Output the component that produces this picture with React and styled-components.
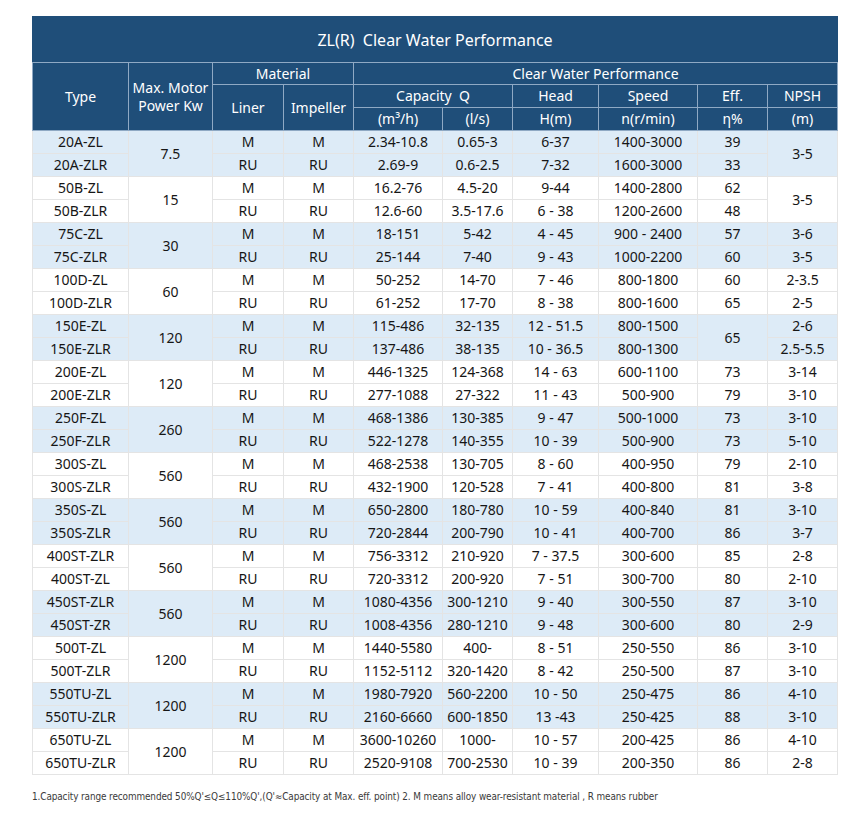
import React from "react";
import styled, { createGlobalStyle } from "styled-components";

const Global = createGlobalStyle`
  html, body { margin: 0; padding: 0; background: #ffffff; }
  body { font-family: "Noto Sans", "Open Sans", sans-serif; }
`;

const Page = styled.div`
  padding: 16px 0 0 32px;
  width: 868px;
  box-sizing: border-box;
`;

const Table = styled.table`
  border-collapse: collapse;
  table-layout: fixed;
  width: 805px;
  font-family: "Noto Sans", "Open Sans", sans-serif;
  font-size: 14px;
`;

const HeadCell = styled.th`
  background: #1f4e79;
  color: #ffffff;
  font-weight: 400;
  border: 1px solid #8fa9c4;
  padding: 0;
  text-align: center;
  vertical-align: middle;
  line-height: 18px;
  white-space: nowrap;
`;

const TitleCell = styled(HeadCell)`
  font-size: 16px;
  white-space: pre;
  border-top-color: #1f4e79;
  border-left-color: #1f4e79;
  border-right-color: #1f4e79;
`;

const HeadRow = styled.tr`
  height: ${(p) => p.$h}px;
`;

const BodyRow = styled.tr`
  height: 23px;
  background: ${(p) => (p.$blue ? "#ddebf7" : "#ffffff")};
`;

const Cell = styled.td`
  border: 1px solid #e4e4e4;
  padding: 0;
  text-align: center;
  vertical-align: middle;
  color: #161616;
  line-height: 18px;
  white-space: nowrap;
`;

const Note = styled.p`
  margin: 16px 0 0 0;
  font-family: "DejaVu Sans Condensed", "Liberation Sans", sans-serif;
  font-size: 9.9px;
  color: #3a3a3a;
  letter-spacing: -0.1px;
  white-space: nowrap;
`;

const widths = [96, 84, 71, 70, 89, 70, 86, 99, 70, 70];

const groups = [
  { power: "7.5", npsh: "3-5", rows: [
    ["20A-ZL", "M", "M", "2.34-10.8", "0.65-3", "6-37", "1400-3000", "39"],
    ["20A-ZLR", "RU", "RU", "2.69-9", "0.6-2.5", "7-32", "1600-3000", "33"] ] },
  { power: "15", npsh: "3-5", rows: [
    ["50B-ZL", "M", "M", "16.2-76", "4.5-20", "9-44", "1400-2800", "62"],
    ["50B-ZLR", "RU", "RU", "12.6-60", "3.5-17.6", "6 - 38", "1200-2600", "48"] ] },
  { power: "30", rows: [
    ["75C-ZL", "M", "M", "18-151", "5-42", "4 - 45", "900 - 2400", "57", "3-6"],
    ["75C-ZLR", "RU", "RU", "25-144", "7-40", "9 - 43", "1000-2200", "60", "3-5"] ] },
  { power: "60", rows: [
    ["100D-ZL", "M", "M", "50-252", "14-70", "7 - 46", "800-1800", "60", "2-3.5"],
    ["100D-ZLR", "RU", "RU", "61-252", "17-70", "8 - 38", "800-1600", "65", "2-5"] ] },
  { power: "120", eff: "65", rows: [
    ["150E-ZL", "M", "M", "115-486", "32-135", "12 - 51.5", "800-1500", null, "2-6"],
    ["150E-ZLR", "RU", "RU", "137-486", "38-135", "10 - 36.5", "800-1300", null, "2.5-5.5"] ] },
  { power: "120", rows: [
    ["200E-ZL", "M", "M", "446-1325", "124-368", "14 - 63", "600-1100", "73", "3-14"],
    ["200E-ZLR", "RU", "RU", "277-1088", "27-322", "11 - 43", "500-900", "79", "3-10"] ] },
  { power: "260", rows: [
    ["250F-ZL", "M", "M", "468-1386", "130-385", "9 - 47", "500-1000", "73", "3-10"],
    ["250F-ZLR", "RU", "RU", "522-1278", "140-355", "10 - 39", "500-900", "73", "5-10"] ] },
  { power: "560", rows: [
    ["300S-ZL", "M", "M", "468-2538", "130-705", "8 - 60", "400-950", "79", "2-10"],
    ["300S-ZLR", "RU", "RU", "432-1900", "120-528", "7 - 41", "400-800", "81", "3-8"] ] },
  { power: "560", rows: [
    ["350S-ZL", "M", "M", "650-2800", "180-780", "10 - 59", "400-840", "81", "3-10"],
    ["350S-ZLR", "RU", "RU", "720-2844", "200-790", "10 - 41", "400-700", "86", "3-7"] ] },
  { power: "560", rows: [
    ["400ST-ZLR", "M", "M", "756-3312", "210-920", "7 - 37.5", "300-600", "85", "2-8"],
    ["400ST-ZL", "RU", "RU", "720-3312", "200-920", "7 - 51", "300-700", "80", "2-10"] ] },
  { power: "560", rows: [
    ["450ST-ZLR", "M", "M", "1080-4356", "300-1210", "9 - 40", "300-550", "87", "3-10"],
    ["450ST-ZR", "RU", "RU", "1008-4356", "280-1210", "9 - 48", "300-600", "80", "2-9"] ] },
  { power: "1200", rows: [
    ["500T-ZL", "M", "M", "1440-5580", "400-", "8 - 51", "250-550", "86", "3-10"],
    ["500T-ZLR", "RU", "RU", "1152-5112", "320-1420", "8 - 42", "250-500", "87", "3-10"] ] },
  { power: "1200", rows: [
    ["550TU-ZL", "M", "M", "1980-7920", "560-2200", "10 - 50", "250-475", "86", "4-10"],
    ["550TU-ZLR", "RU", "RU", "2160-6660", "600-1850", "13 -43", "250-425", "88", "3-10"] ] },
  { power: "1200", rows: [
    ["650TU-ZL", "M", "M", "3600-10260", "1000-", "10 - 57", "200-425", "86", "4-10"],
    ["650TU-ZLR", "RU", "RU", "2520-9108", "700-2530", "10 - 39", "200-350", "86", "2-8"] ] },
];

function Group({ g, blue }) {
  return g.rows.map((r, i) => {
    const [type, liner, imp, cap, ls, head, speed, eff, npsh] = r;
    return (
      <BodyRow key={i} $blue={blue}>
        <Cell>{type}</Cell>
        {i === 0 && <Cell rowSpan={2}>{g.power}</Cell>}
        <Cell>{liner}</Cell>
        <Cell>{imp}</Cell>
        <Cell>{cap}</Cell>
        <Cell>{ls}</Cell>
        <Cell>{head}</Cell>
        <Cell>{speed}</Cell>
        {g.eff ? (i === 0 && <Cell rowSpan={2}>{g.eff}</Cell>) : <Cell>{eff}</Cell>}
        {g.npsh ? (i === 0 && <Cell rowSpan={2}>{g.npsh}</Cell>) : <Cell>{npsh}</Cell>}
      </BodyRow>
    );
  });
}

export default function App() {
  return (
    <Page>
      <Global />
      <Table>
        <colgroup>
          {widths.map((w, i) => (
            <col key={i} style={{ width: w }} />
          ))}
        </colgroup>
        <thead>
          <HeadRow $h={46}>
            <TitleCell colSpan={10}>{"ZL(R)  Clear Water Performance"}</TitleCell>
          </HeadRow>
          <HeadRow $h={22}>
            <HeadCell rowSpan={3}>Type</HeadCell>
            <HeadCell rowSpan={3}>
              Max. Motor
              <br />
              Power Kw
            </HeadCell>
            <HeadCell colSpan={2}>Material</HeadCell>
            <HeadCell colSpan={6}>Clear Water Performance</HeadCell>
          </HeadRow>
          <HeadRow $h={23}>
            <HeadCell rowSpan={2}>Liner</HeadCell>
            <HeadCell rowSpan={2}>Impeller</HeadCell>
            <HeadCell colSpan={2}>Capacity&nbsp; Q</HeadCell>
            <HeadCell>Head</HeadCell>
            <HeadCell>Speed</HeadCell>
            <HeadCell>Eff.</HeadCell>
            <HeadCell>NPSH</HeadCell>
          </HeadRow>
          <HeadRow $h={23}>
            <HeadCell>(m³/h)</HeadCell>
            <HeadCell>(l/s)</HeadCell>
            <HeadCell>H(m)</HeadCell>
            <HeadCell>n(r/min)</HeadCell>
            <HeadCell>η%</HeadCell>
            <HeadCell>(m)</HeadCell>
          </HeadRow>
        </thead>
        <tbody>
          {groups.map((g, gi) => (
            <Group key={gi} g={g} blue={gi % 2 === 0} />
          ))}
        </tbody>
      </Table>
      <Note>
        1.Capacity range recommended 50%Q'≤Q≤110%Q',(Q'≈Capacity at Max. eff. point) 2. M means alloy wear-resistant material , R means rubber
      </Note>
    </Page>
  );
}
